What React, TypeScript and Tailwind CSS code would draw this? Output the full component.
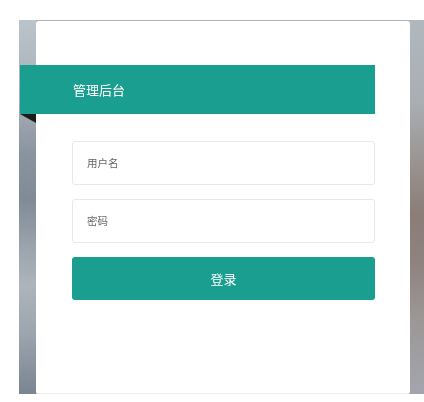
export default function App() {
  return (
    <div className="h-[402px] w-[424px] overflow-hidden bg-white pl-[19px] pt-5 font-['Noto_Sans_CJK_SC',sans-serif] blur-[0.5px]">
      <div className="flex h-[374px] bg-[#b0b6bc]">
        {/* background photo, only its edges show beside the card */}
        <div className="w-[17px] bg-[linear-gradient(180deg,#bcc4cb_0%,#a6aeb6_22%,#8a949f_36%,#808b97_48%,#9aa2ab_60%,#adb4bb_71%,#9ca4ad_84%,#7a8592_100%)]" />
        <div className="w-[374px] rounded-[3px] border-t border-b border-t-[#aab3c2] border-b-[#f0f0f0] bg-white">
          {/* title ribbon hangs out of the card on the left */}
          <div className="relative mt-11 -ml-4 mr-[35px] flex h-[49px] items-center bg-[#1a9e8f] pl-[53px] text-[13px] text-white">
            管理后台
            <div className="absolute left-0 top-full h-0 w-0 border-l-[16px] border-t-[9px] border-l-transparent border-t-[#1c1c1c]" />
          </div>
          <form className="ml-9 mr-[35px] mt-[27px] flex flex-col gap-3.5">
            <input
              placeholder="用户名"
              className="h-[44px] rounded-[3px] border border-[#e8e8e8] bg-white pb-0.5 pl-3.5 text-[10.5px] placeholder:text-[#666]"
            />
            <input
              placeholder="密码"
              className="h-[44px] rounded-[3px] border border-[#e8e8e8] bg-white pb-0.5 pl-3.5 text-[10.5px] placeholder:text-[#666]"
            />
            <button type="button" className="h-[43px] rounded-[3px] bg-[#1a9e8f] text-[13px] text-white">
              登录
            </button>
          </form>
        </div>
        <div className="flex-1 bg-[linear-gradient(180deg,#b0b8be_0%,#a9aeb3_22%,#9a9491_38%,#8a7d78_52%,#8f8380_65%,#9c9796_80%,#a3a5ae_100%)]" />
      </div>
    </div>
  );
}
